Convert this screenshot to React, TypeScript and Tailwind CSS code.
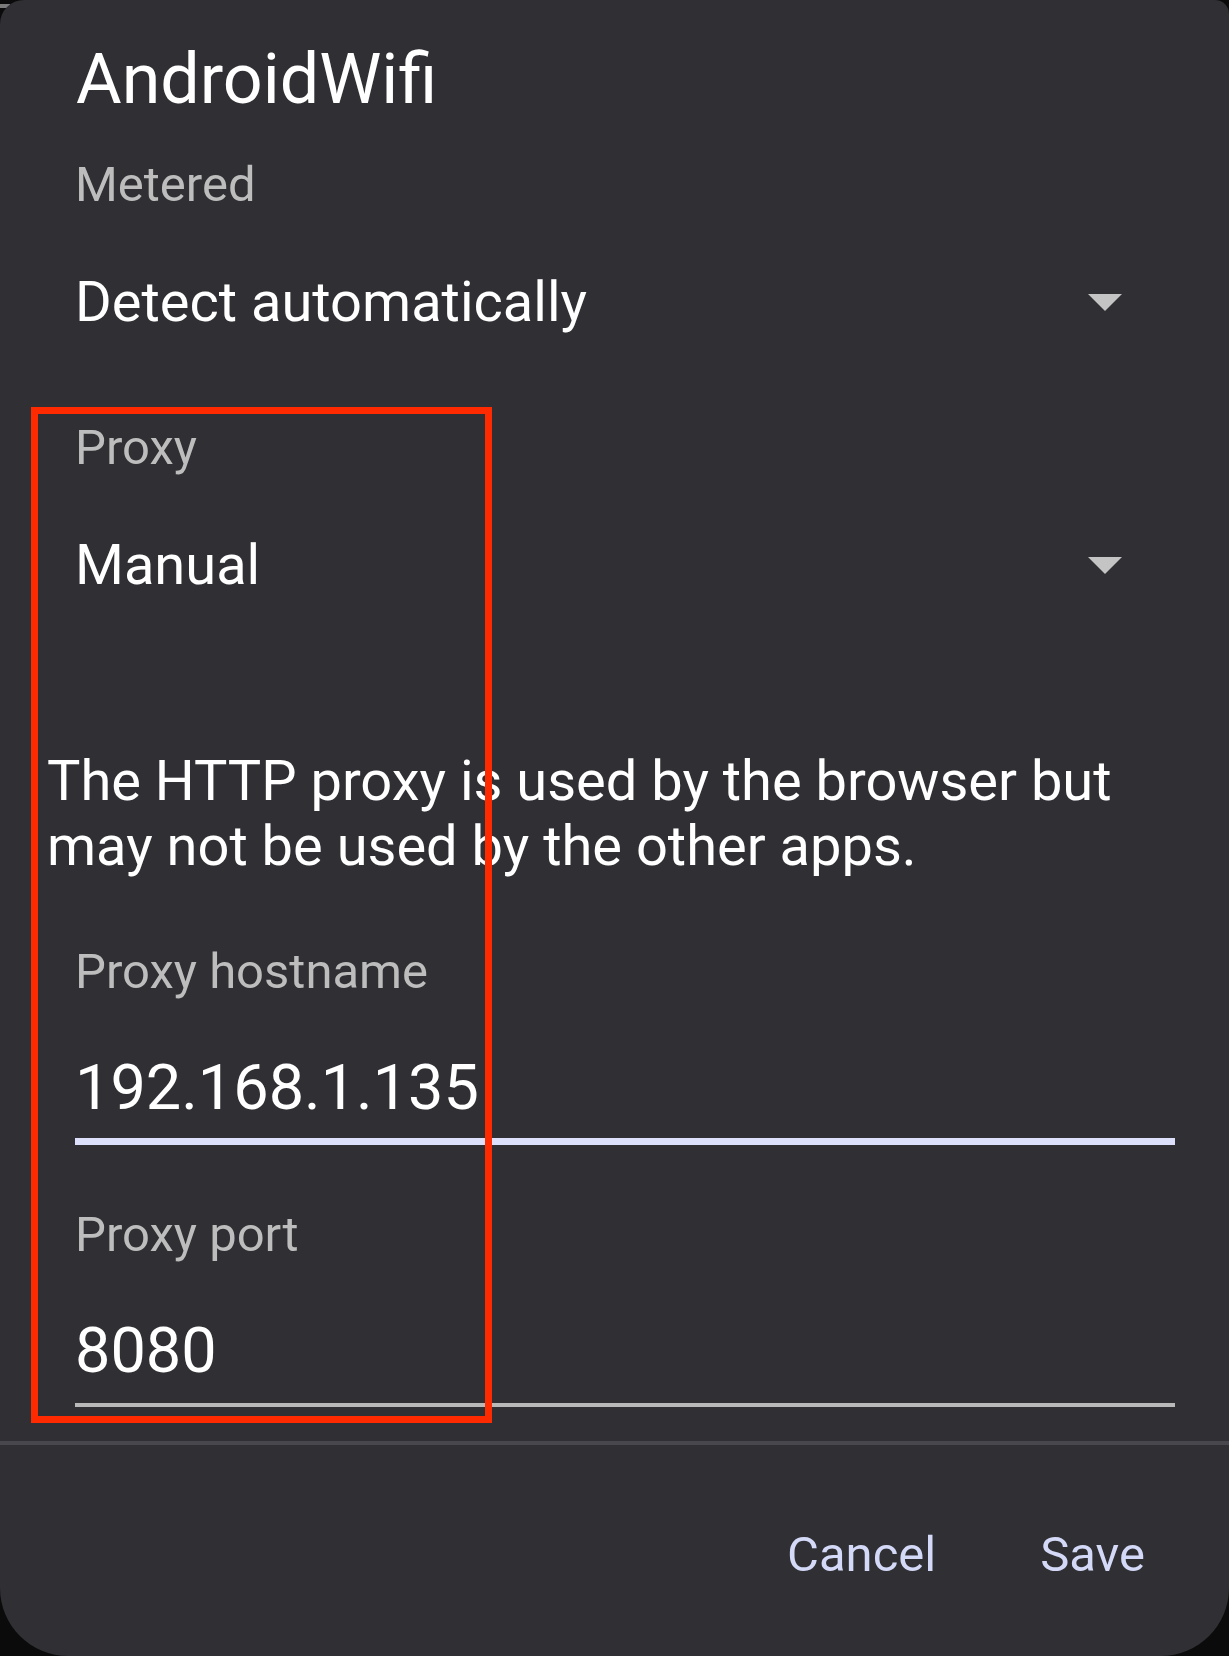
import React from 'react';

const font = "font-['Roboto','Noto_Sans',sans-serif]";

function DropArrow() {
  return (
    <svg width="34" height="17" viewBox="0 0 34 17" className="mr-[53px] shrink-0">
      <path d="M0 0 H34 L17 17 Z" fill="#c4c4c4" />
    </svg>
  );
}

function Spinner({ label, value }: { label: string; value: string }) {
  return (
    <div className="flex flex-col">
      <div className="text-[49px] leading-[57px] text-[#bdbdbd]">{label}</div>
      <div className="flex items-center justify-between mt-[56px]">
        <span className="text-[56px] leading-[66px] text-white">{value}</span>
        <DropArrow />
      </div>
    </div>
  );
}

function Field({ label, value, focused }: { label: string; value: string; focused?: boolean }) {
  return (
    <div className="flex flex-col">
      <div className="text-[49px] leading-[57px] text-[#bdbdbd]">{label}</div>
      <div className="mt-[51px] text-[63px] leading-[74px] text-white">{value}</div>
      {focused ? (
        <div className="mt-[13px] h-[7px] bg-[#dce0fb]" />
      ) : (
        <div className="mt-[15px] h-[4px] bg-[#b9b9b9]" />
      )}
    </div>
  );
}

export default function App() {
  return (
    <div className={`relative w-full h-[1656px] bg-[#0b0b0b] overflow-hidden ${font}`}>
      <div className="absolute left-0 top-[4px] w-[10px] h-[4px] bg-[#7a7a7a]" />
      <div className="relative h-full bg-[#2f2f34] rounded-tl-[24px] rounded-tr-[14px] rounded-b-[68px] flex flex-col">
        <div className="flex flex-col pl-[75px] pr-[54px] pt-[38px]">
          <h1 className="ml-[1px] text-[70px] leading-[82px] text-white font-normal">AndroidWifi</h1>

          <div className="mt-[36px]">
            <Spinner label="Metered" value="Detect automatically" />
          </div>

          <div className="mt-[84px]">
            <Spinner label="Proxy" value="Manual" />
          </div>

          <p className="mt-[151px] ml-[-28px] text-[56px] leading-[65px] text-white pr-[20px]">
            The HTTP proxy is used by the browser but may not be used by the other apps.
          </p>

          <div className="mt-[64px]">
            <Field label="Proxy hostname" value="192.168.1.135" focused />
          </div>

          <div className="mt-[61px]">
            <Field label="Proxy port" value="8080" />
          </div>
        </div>

        <div className="mt-[34px] h-[4px] bg-[#47474d]" />

        <div className="flex justify-end gap-[104px] pr-[84px] mt-[81px]">
          <button className="text-[49px] leading-[57px] text-[#d4d9f7]">Cancel</button>
          <button className="text-[49px] leading-[57px] text-[#d4d9f7]">Save</button>
        </div>
      </div>

      {/* annotation box */}
      <div className="absolute left-[31px] top-[407px] w-[461px] h-[1016px] border-[7px] border-[#ff2a00] pointer-events-none" />
    </div>
  );
}
